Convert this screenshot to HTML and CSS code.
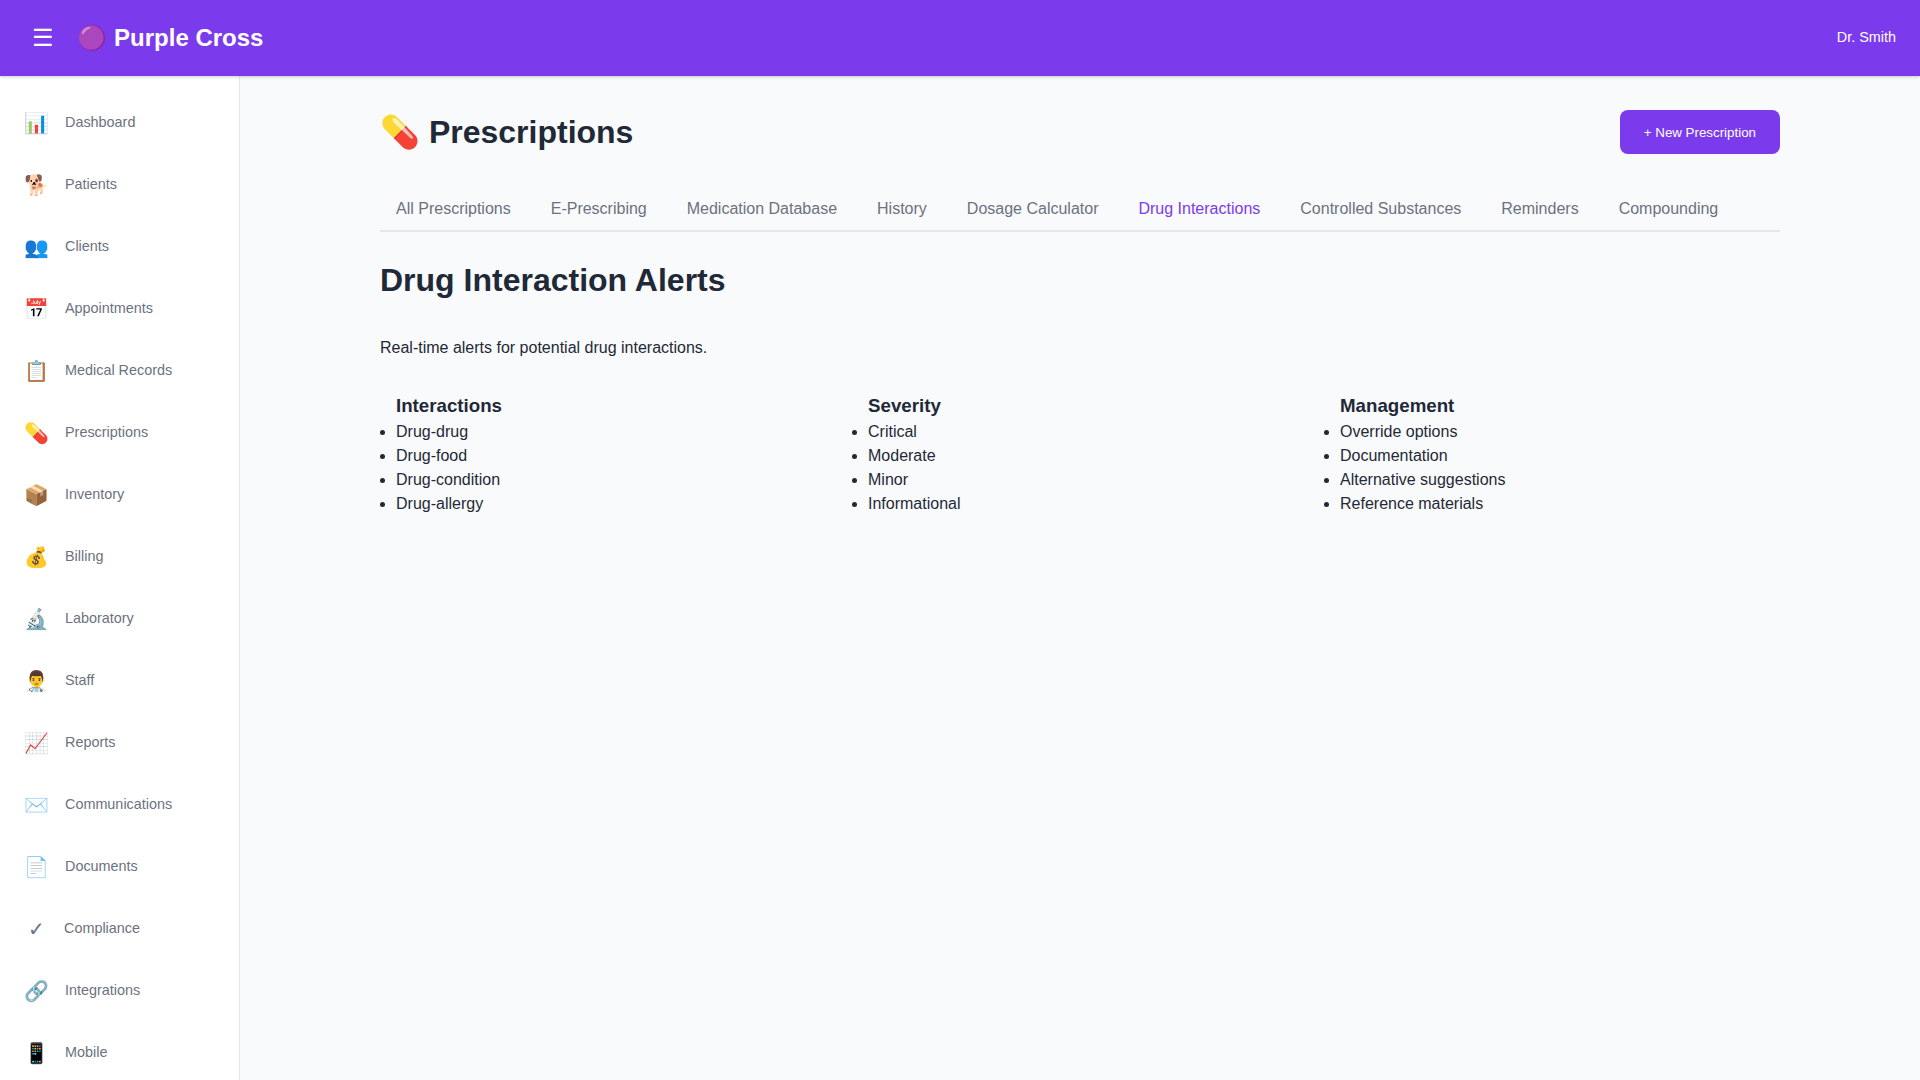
FILE: index.html
```html
<!DOCTYPE html>
<html lang="en">
<head>
<meta charset="UTF-8">
<title>Purple Cross</title>
<link rel="stylesheet" href="styles.css">
</head>
<body>
<div class="app">
<header class="header">
<div class="header-left">
<button class="menu-toggle">☰</button>
<h1 class="logo">🟣 Purple Cross</h1>
</div>
<span class="user">Dr. Smith</span>
</header>
<div class="layout">
<nav class="sidebar">
<a class="nav-item"><span class="nav-icon">📊</span><span class="nav-label">Dashboard</span></a>
<a class="nav-item"><span class="nav-icon">🐕</span><span class="nav-label">Patients</span></a>
<a class="nav-item"><span class="nav-icon">👥</span><span class="nav-label">Clients</span></a>
<a class="nav-item"><span class="nav-icon">📅</span><span class="nav-label">Appointments</span></a>
<a class="nav-item"><span class="nav-icon">📋</span><span class="nav-label">Medical Records</span></a>
<a class="nav-item"><span class="nav-icon">💊</span><span class="nav-label">Prescriptions</span></a>
<a class="nav-item"><span class="nav-icon">📦</span><span class="nav-label">Inventory</span></a>
<a class="nav-item"><span class="nav-icon">💰</span><span class="nav-label">Billing</span></a>
<a class="nav-item"><span class="nav-icon">🔬</span><span class="nav-label">Laboratory</span></a>
<a class="nav-item"><span class="nav-icon">👨‍⚕️</span><span class="nav-label">Staff</span></a>
<a class="nav-item"><span class="nav-icon">📈</span><span class="nav-label">Reports</span></a>
<a class="nav-item"><span class="nav-icon">✉️</span><span class="nav-label">Communications</span></a>
<a class="nav-item"><span class="nav-icon">📄</span><span class="nav-label">Documents</span></a>
<a class="nav-item"><span class="nav-icon">✓</span><span class="nav-label">Compliance</span></a>
<a class="nav-item"><span class="nav-icon">🔗</span><span class="nav-label">Integrations</span></a>
<a class="nav-item"><span class="nav-icon">📱</span><span class="nav-label">Mobile</span></a>
</nav>
<main class="main">
<div class="page">
<div class="page-header">
<h1 class="page-title">💊 Prescriptions</h1>
<button class="btn-primary">+ New Prescription</button>
</div>
<div class="tabs">
<button class="tab">All Prescriptions</button>
<button class="tab">E-Prescribing</button>
<button class="tab">Medication Database</button>
<button class="tab">History</button>
<button class="tab">Dosage Calculator</button>
<button class="tab tab-active">Drug Interactions</button>
<button class="tab">Controlled Substances</button>
<button class="tab">Reminders</button>
<button class="tab">Compounding</button>
</div>
<h2 class="section-title">Drug Interaction Alerts</h2>
<p class="intro">Real-time alerts for potential drug interactions.</p>
<div class="features">
<section class="feature">
<h3>Interactions</h3>
<ul><li>Drug-drug</li><li>Drug-food</li><li>Drug-condition</li><li>Drug-allergy</li></ul>
</section>
<section class="feature">
<h3>Severity</h3>
<ul><li>Critical</li><li>Moderate</li><li>Minor</li><li>Informational</li></ul>
</section>
<section class="feature">
<h3>Management</h3>
<ul><li>Override options</li><li>Documentation</li><li>Alternative suggestions</li><li>Reference materials</li></ul>
</section>
</div>
</div>
</main>
</div>
</div>
</body>
</html>
```
FILE: styles.css
```css
* {
  margin: 0;
  padding: 0;
  box-sizing: border-box;
}

body {
  font-family: "Liberation Sans", Arial, sans-serif;
  font-size: 16px;
  line-height: 1.5;
  color: #1f2937;
  background: #f9fafb;
}

button {
  border: none;
  background: none;
  font-family: inherit;
}

.app {
  display: flex;
  flex-direction: column;
  height: 100vh;
  overflow: hidden;
}

.header {
  position: relative;
  z-index: 1;
  display: flex;
  flex: none;
  justify-content: space-between;
  align-items: center;
  height: 76px;
  padding: 0 24px;
  color: #fff;
  background: #7c3aed;
  box-shadow: 0 1px 3px rgba(0, 0, 0, 0.2);
}

.header-left {
  display: flex;
  align-items: center;
  gap: 15.4px;
}

.menu-toggle {
  padding: 8px;
  font-size: 24px;
  color: #fff;
}

.logo {
  font-size: 24px;
}

.user {
  font-size: 14.4px;
}

.layout {
  display: flex;
  flex: 1;
  min-height: 0;
}

.sidebar {
  flex: none;
  width: 240px;
  padding: 16px 0;
  overflow: hidden;
  background: #fff;
  border-right: 1px solid #e5e7eb;
}

.nav-item {
  display: flex;
  align-items: center;
  gap: 16px;
  height: 62px;
  padding: 0 24px;
  color: #6b7280;
}

.nav-icon {
  min-width: 24px;
  font-size: 20px;
  text-align: center;
}

.nav-label {
  font-size: 14.4px;
}

.main {
  flex: 1;
  padding: 32px;
}

.page {
  max-width: 1400px;
  margin: 0 auto;
}

.page-header {
  display: flex;
  justify-content: space-between;
  align-items: center;
  height: 48px;
  margin-bottom: 32px;
}

.page-title,
.section-title {
  font-size: 32px;
}

.btn-primary {
  height: 44px;
  padding: 0 24px;
  font-size: 13.333px;
  color: #fff;
  background: #7c3aed;
  border-radius: 8px;
}

.tabs {
  display: flex;
  gap: 8px;
  margin-bottom: 24px;
  border-bottom: 2px solid #e5e7eb;
}

.tab {
  padding: 12px 16px;
  font-size: 16px;
  color: #6b7280;
}

.tab-active {
  color: #7c3aed;
}

.section-title {
  margin-bottom: 32px;
}

.intro {
  margin-bottom: 32px;
}

.features {
  display: grid;
  grid-template-columns: repeat(3, 1fr);
  gap: 16px;
}

.feature {
  padding-left: 16px;
}

.feature h3 {
  font-size: 18.72px;
}
```
